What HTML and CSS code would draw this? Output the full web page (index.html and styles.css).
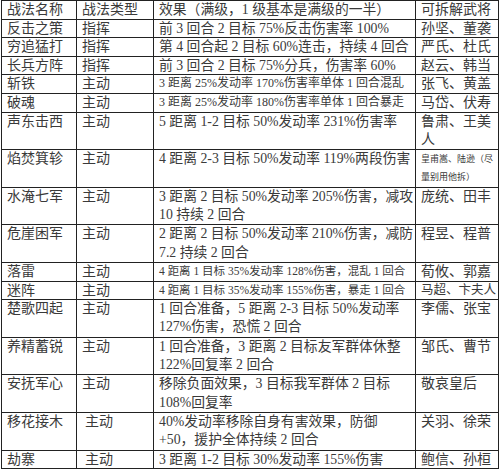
FILE: index.html
```html
<!DOCTYPE html>
<html lang="zh-CN">
<head>
<meta charset="utf-8">
<title>战法拆解表</title>
<link rel="stylesheet" href="styles.css">
</head>
<body>
<table class="tbl">
  <colgroup>
    <col class="c1"><col class="c2"><col class="c3"><col class="c4">
  </colgroup>
  <tr><td>战法名称</td><td>战法类型</td><td class="eff">效果（满级，1 级基本是满级的一半）</td><td>可拆解武将</td></tr>
  <tr><td>反击之策</td><td>指挥</td><td class="eff">前 3 回合 2 目标 75%反击伤害率 100%</td><td>孙坚、董袭</td></tr>
  <tr><td>穷追猛打</td><td>指挥</td><td class="eff">第 4 回合起 2 目标 60%连击，持续 4 回合</td><td>严氏、杜氏</td></tr>
  <tr><td>长兵方阵</td><td>指挥</td><td class="eff">前 3 回合 2 目标 75%分兵，伤害率 60%</td><td>赵云、韩当</td></tr>
  <tr><td>斩铁</td><td>主动</td><td class="sm">3 距离 25%发动率 170%伤害率单体 1 回合混乱</td><td>张飞、黄盖</td></tr>
  <tr><td>破魂</td><td>主动</td><td class="sm">3 距离 25%发动率 180%伤害率单体 1 回合暴走</td><td>马岱、伏寿</td></tr>
  <tr class="two"><td>声东击西</td><td>主动</td><td class="eff">5 距离 1-2 目标 50%发动率 231%伤害率</td><td>鲁肃、王美<br>人</td></tr>
  <tr class="two"><td>焰焚箕轸</td><td>主动</td><td class="eff">4 距离 2-3 目标 50%发动率 119%两段伤害</td><td class="tiny">皇甫嵩、陆逊（尽<br>量别用他拆）</td></tr>
  <tr class="two"><td>水淹七军</td><td>主动</td><td class="eff">3 距离 2 目标 50%发动率 205%伤害，减攻<br>10 持续 2 回合</td><td>庞统、田丰</td></tr>
  <tr class="two"><td>危崖困军</td><td>主动</td><td class="eff">2 距离 2 目标 50%发动率 210%伤害，减防<br>7.2 持续 2 回合</td><td>程昱、程普</td></tr>
  <tr><td>落雷</td><td>主动</td><td class="xs">4 距离 1 目标 35%发动率 128%伤害，混乱 1 回合</td><td>荀攸、郭嘉</td></tr>
  <tr><td>迷阵</td><td>主动</td><td class="xs">4 距离 1 目标 35%发动率 155%伤害，暴走 1 回合</td><td class="narrow">马超、卞夫人</td></tr>
  <tr class="two"><td>楚歌四起</td><td>主动</td><td class="eff">1 回合准备，5 距离 2-3 目标 50%发动率<br>127%伤害，恐慌 2 回合</td><td>李儒、张宝</td></tr>
  <tr class="two"><td>养精蓄锐</td><td>主动</td><td class="eff">1 回合准备，3 距离 2 目标友军群体休整<br>122%回复率 2 回合</td><td>邹氏、曹节</td></tr>
  <tr class="two"><td>安抚军心</td><td>主动</td><td class="eff">移除负面效果，3 目标我军群体 2 目标<br>108%回复率</td><td>敬哀皇后</td></tr>
  <tr class="two"><td>移花接木</td><td class="ind">主动</td><td class="eff">40%发动率移除自身有害效果，防御<br>+50，援护全体持续 2 回合</td><td>关羽、徐荣</td></tr>
  <tr><td>劫寨</td><td class="ind">主动</td><td class="eff">3 距离 1-2 目标 30%发动率 155%伤害</td><td>鲍信、孙桓</td></tr>
</table>
</body>
</html>
```
FILE: styles.css
```css
html, body {
  margin: 0;
  padding: 0;
  background: #ffffff;
}

.tbl {
  margin: 0 0 0 1px;
  width: 497px;
  border-collapse: collapse;
  table-layout: fixed;
  font-family: "Liberation Serif", "Noto Sans CJK SC", serif;
  font-size: 14px;
  color: #3a3a3a;
}

.c1 { width: 75px; }
.c2 { width: 77px; }
.c3 { width: 262px; }
.c4 { width: 83px; }

.tbl td {
  border: 1px solid #222222;
  padding: 0 3px 0 5px;
  line-height: 17.6px;
  vertical-align: top;
  white-space: nowrap;
  overflow: hidden;
}

.tbl tr.two td {
  line-height: 18.3px;
}

.tbl td.eff {
  font-size: 13.8px;
}

.tbl td.sm {
  font-size: 12px;
}

.tbl td.xs {
  font-size: 11.5px;
}

.tbl td.narrow {
  font-size: 12.5px;
}

.tbl td.tiny {
  font-size: 9px;
}

.tbl td.ind {
  padding-left: 8px;
}
```
